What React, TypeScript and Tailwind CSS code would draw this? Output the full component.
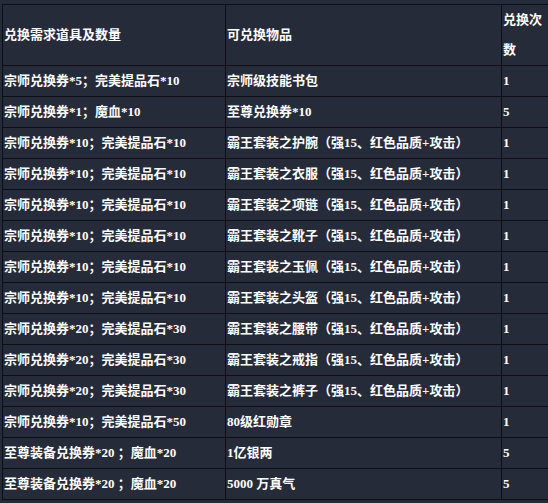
const rows: [string, string, string][] = [
  ["宗师兑换券*5；完美提品石*10", "宗师级技能书包", "1"],
  ["宗师兑换券*1；魔血*10", "至尊兑换券*10", "5"],
  ["宗师兑换券*10；完美提品石*10", "霸王套装之护腕（强15、红色品质+攻击）", "1"],
  ["宗师兑换券*10；完美提品石*10", "霸王套装之衣服（强15、红色品质+攻击）", "1"],
  ["宗师兑换券*10；完美提品石*10", "霸王套装之项链（强15、红色品质+攻击）", "1"],
  ["宗师兑换券*10；完美提品石*10", "霸王套装之靴子（强15、红色品质+攻击）", "1"],
  ["宗师兑换券*10；完美提品石*10", "霸王套装之玉佩（强15、红色品质+攻击）", "1"],
  ["宗师兑换券*10；完美提品石*10", "霸王套装之头盔（强15、红色品质+攻击）", "1"],
  ["宗师兑换券*20；完美提品石*30", "霸王套装之腰带（强15、红色品质+攻击）", "1"],
  ["宗师兑换券*20；完美提品石*30", "霸王套装之戒指（强15、红色品质+攻击）", "1"],
  ["宗师兑换券*20；完美提品石*30", "霸王套装之裤子（强15、红色品质+攻击）", "1"],
  ["宗师兑换券*10；完美提品石*50", "80级红勋章", "1"],
  ["至尊装备兑换券*20 ；魔血*20", "1亿银两", "5"],
  ["至尊装备兑换券*20 ；魔血*20", "5000 万真气", "5"],
];

const cell = "border border-[#0d0f14] pl-px pr-0 py-0 align-middle text-left leading-[30px]";

export default function App() {
  return (
    <div className="w-[548px] h-[503px] overflow-hidden bg-[#262b3a] pl-[2px] pt-[4px] text-white font-bold text-[13px] font-['Liberation_Serif','Noto_Sans_CJK_SC',serif]">
      <table className="table-fixed border-collapse w-[548px]">
        <colgroup>
          <col className="w-[223px]" />
          <col className="w-[276px]" />
          <col className="w-[49px]" />
        </colgroup>
        <thead>
          <tr>
            <th className={cell}>兑换需求道具及数量</th>
            <th className={cell}>可兑换物品</th>
            <th className={cell}>兑换次数</th>
          </tr>
        </thead>
        <tbody>
          {rows.map((r, i) => (
            <tr key={i}>
              <td className={cell}>{r[0]}</td>
              <td className={cell}>{r[1]}</td>
              <td className={cell}>{r[2]}</td>
            </tr>
          ))}
        </tbody>
      </table>
    </div>
  );
}
